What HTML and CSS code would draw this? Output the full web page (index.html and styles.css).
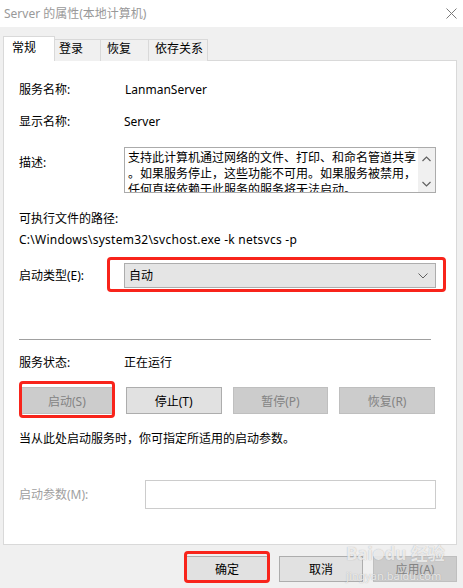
FILE: index.html
```html
<!DOCTYPE html>
<html lang="zh-CN">
<head>
    <meta charset="UTF-8">
    <title>Server 的属性(本地计算机)</title>
    <link rel="stylesheet" href="styles.css">
</head>
<body>
    <div class="titlebar">
        <span class="title">Server 的属性(本地计算机)</span>
        <svg class="close" width="11" height="11" viewBox="0 0 11 11">
            <path d="M0.5 0.5 L10.5 10.5 M10.5 0.5 L0.5 10.5" stroke="#7a7a7a" stroke-width="1" fill="none"/>
        </svg>
    </div>

    <div class="tabs">
        <div class="tab active">常规</div>
        <div class="tab t-login">登录</div>
        <div class="tab t-recover">恢复</div>
        <div class="tab t-deps">依存关系</div>
    </div>

    <div class="panel">
        <div class="row r-name">
            <span class="label">服务名称:</span>
            <span class="value">LanmanServer</span>
        </div>
        <div class="row r-display">
            <span class="label">显示名称:</span>
            <span class="value">Server</span>
        </div>
        <div class="row r-desc">
            <span class="label">描述:</span>
            <div class="desc-box">
                <div class="desc-text">
                    支持此计算机通过网络的文件、打印、和命名管道共享<br>
                    。如果服务停止，这些功能不可用。如果服务被禁用，<br>
                    任何直接依赖于此服务的服务将无法启动。
                </div>
                <div class="scroll">
                    <svg width="9" height="6" viewBox="0 0 9 6"><path d="M0.5 5 L4.5 1 L8.5 5" stroke="#606060" stroke-width="1.2" fill="none"/></svg>
                    <svg width="9" height="6" viewBox="0 0 9 6"><path d="M0.5 1 L4.5 5 L8.5 1" stroke="#606060" stroke-width="1.2" fill="none"/></svg>
                </div>
            </div>
        </div>
        <div class="path-label">可执行文件的路径:</div>
        <div class="path">C:\Windows\system32\svchost.exe -k netsvcs -p</div>
        <div class="row r-type">
            <span class="label">启动类型(E):</span>
            <div class="select marked-select">
                <span>自动</span>
                <svg width="10" height="6" viewBox="0 0 10 6"><path d="M0.5 0.5 L5 5 L9.5 0.5" stroke="#606060" stroke-width="1" fill="none"/></svg>
            </div>
        </div>
        <div class="separator"></div>
        <div class="row r-status">
            <span class="label">服务状态:</span>
            <span class="value">正在运行</span>
        </div>
        <div class="svc-buttons">
            <button class="btn disabled marked-start">启动(S)</button>
            <button class="btn">停止(T)</button>
            <button class="btn disabled">暂停(P)</button>
            <button class="btn disabled">恢复(R)</button>
        </div>
        <div class="note">当从此处启动服务时，你可指定所适用的启动参数。</div>
        <div class="row r-params">
            <span class="label label-wide dim">启动参数(M):</span>
            <div class="param-input"></div>
        </div>
    </div>

    <div class="footer">
        <button class="btn btn-foot marked-ok">确定</button>
        <button class="btn btn-foot">取消</button>
        <button class="btn btn-foot disabled">应用(A)</button>
        <div class="watermark">
            <span class="wm-logo">Bai<span class="paw">&#9679;</span>du 经验</span>
            <span class="wm-url">jingyan.baidu.com</span>
        </div>
    </div>
</body>
</html>
```

FILE: styles.css
```css
body {
    margin: 0;
    width: 463px;
    height: 588px;
    overflow: hidden;
    background: #f0f0f0;
    font-family: "Noto Sans", "Noto Sans CJK SC", sans-serif;
    font-size: 12px;
    line-height: 16px;
    color: #000;
    position: relative;
}

.titlebar {
    height: 27px;
    background: #fff;
    display: flex;
    align-items: center;
    justify-content: space-between;
    padding: 0 6px 0 4px;
    box-sizing: border-box;
}
.title {
    color: #999;
}

/* tabs */
.tabs {
    display: flex;
    align-items: flex-end;
    margin-top: 9px;
    padding-left: 3px;
    margin-bottom: -1px;
    position: relative;
    z-index: 1;
}
.tab {
    box-sizing: border-box;
    height: 22px;
    line-height: 18px;
    border: 1px solid #d9d9d9;
    border-bottom: none;
    background: #f0f0f0;
    padding-left: 4px;
    margin-left: -1px;
}
.tab.active {
    margin-left: 0;
    width: 52px;
    height: 25px;
    line-height: 22px;
    padding-left: 8px;
    background: #fff;
    position: relative;
    z-index: 2;
}
.t-login { width: 47px; }
.t-recover { width: 49px; padding-left: 6px; }
.t-deps { width: 60px; padding-left: 6px; }

/* main panel */
.panel {
    margin: 0 6px 0 3px;
    height: 485px;
    box-sizing: border-box;
    background: #fff;
    border: 1px solid #d9d9d9;
    padding: 19px 15px 0 15px;
}
.row {
    display: flex;
    align-items: center;
}
.label {
    width: 105px;
    flex: none;
}
.label-wide {
    width: 126px;
}
.dim {
    color: #a0a0a0;
}
.r-name { height: 20px; }
.r-name .value { padding-left: 1px; }
.r-display { height: 20px; margin-top: 12px; }

.r-desc {
    margin-top: 15px;
    align-items: flex-start;
}
.r-desc .label { padding-top: 8px; }
.desc-box {
    width: 312px;
    height: 46px;
    box-sizing: border-box;
    border: 1px solid #ababab;
    display: flex;
    overflow: hidden;
}
.desc-text {
    flex: 1;
    padding: 2px 0 0 3px;
    white-space: nowrap;
    overflow: hidden;
}
.scroll {
    width: 17px;
    background: #f0f0f0;
    display: flex;
    flex-direction: column;
    align-items: center;
    justify-content: space-between;
    padding: 8px 0 5px;
    box-sizing: border-box;
}

.path-label { margin-top: 18px; }
.path {
    margin-top: 5px;
    letter-spacing: 0.25px;
}

.r-type { margin-top: 15px; }
.select {
    width: 312px;
    height: 25px;
    box-sizing: border-box;
    border: 1px solid #adadad;
    background: #e5e5e5;
    display: flex;
    align-items: center;
    justify-content: space-between;
    padding: 0 7px 0 4px;
}

.separator {
    margin-top: 51px;
    width: 412px;
    height: 1px;
    background: #a0a0a0;
}

.r-status { margin-top: 15px; }

.svc-buttons {
    margin-top: 16px;
    width: 416px;
    display: grid;
    grid-template-columns: repeat(4, 1fr);
    column-gap: 11px;
}
.btn {
    height: 27px;
    box-sizing: border-box;
    border: 1px solid #adadad;
    background: #e1e1e1;
    font-family: inherit;
    font-size: 12px;
    color: #000;
    padding: 0;
}
.btn.disabled {
    background: #cccccc;
    border-color: #bfbfbf;
    color: #838383;
}

.note { margin-top: 17px; }

.r-params { margin-top: 33px; }
.param-input {
    width: 291px;
    height: 29px;
    box-sizing: border-box;
    border: 1px solid #cccccc;
    background: #fff;
}

/* dialog buttons */
.footer {
    margin-top: 11px;
    padding-right: 6px;
    display: flex;
    justify-content: flex-end;
    gap: 10px;
    position: relative;
}
.btn-foot {
    width: 84px;
    height: 26px;
}

/* red highlight boxes drawn over the screenshot */
.marked-select, .marked-start, .marked-ok {
    position: relative;
}
.marked-select::after, .marked-start::after, .marked-ok::after {
    content: "";
    position: absolute;
    border: 3px solid #f8241b;
    border-radius: 4px;
    pointer-events: none;
}
.marked-select::after { left: -18px; right: -11px; top: -7px; bottom: -5px; }
.marked-start::after { left: -1px; right: -1px; top: -7px; bottom: -5px; }
.marked-ok::after { left: -2px; right: -2px; top: -6px; bottom: -2px; }

/* watermark */
.watermark {
    position: absolute;
    left: 346px;
    top: -12px;
    display: flex;
    flex-direction: column;
    color: rgba(255, 255, 255, 0.75);
    text-shadow: 0 0 1px rgba(120, 120, 120, 0.6);
    pointer-events: none;
}
.wm-logo {
    font-size: 17px;
    line-height: 20px;
    font-weight: bold;
}
.paw {
    font-size: 12px;
}
.wm-url {
    font-size: 11px;
    line-height: 14px;
    margin-top: 3px;
}
```
